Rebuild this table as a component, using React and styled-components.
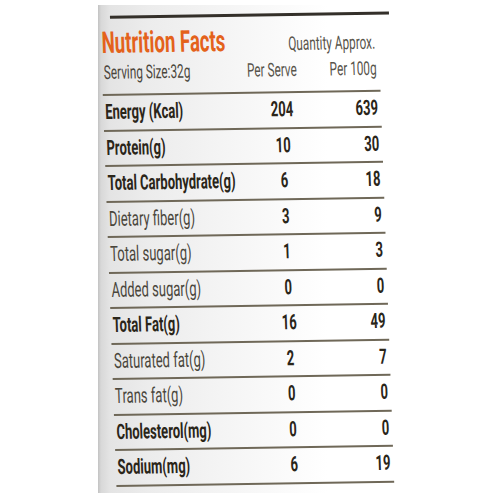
import React from "react";
import styled, { createGlobalStyle } from "styled-components";

const Global = createGlobalStyle`
  html, body { margin: 0; padding: 0; background: #fff; overflow: hidden; }
  body { font-family: Roboto, "Liberation Sans", sans-serif; }
`;

const Panel = styled.div`
  margin: 5px 0 0 98px;
  height: 488px;
  box-sizing: border-box;
  padding-top: 5px;
  background: linear-gradient(
    to right,
    #c2c2c2 0px,
    #d8d8d8 3px,
    #e4e4e4 12px,
    #ececec 50px,
    #f6f6f6 140px,
    #ffffff 230px
  );
`;

const Label = styled.div`
  width: 448px;
  margin-left: 2px;
  transform-origin: 0 0;
  transform: skew(2deg, -0.9deg) scaleX(0.62);
`;

const TopRule = styled.div`
  margin: 6px 0 0 16px;
  width: 450px;
  height: 3px;
  background: #34302a;
`;

const TitleRow = styled.div`
  display: flex;
  justify-content: space-between;
  align-items: baseline;
  margin-top: 8px;
  height: 32px;
  line-height: 32px;
  padding: 0 6px 0 1px;
`;

const Title = styled.div`
  font-size: 30px;
  font-weight: 700;
  color: #e4621b;
`;

const Qty = styled.div`
  font-size: 19px;
  color: #58544b;
`;

const Grid = styled.div`
  display: grid;
  grid-template-columns: 238px 100px 110px;
  align-items: center;
  white-space: nowrap;
`;

const SubHead = styled(Grid)`
  margin-top: 3px;
  line-height: 22px;
  padding-bottom: 10px;
  border-bottom: 2px solid #6f6858;
  font-size: 19px;
  color: #58544b;
`;

const Row = styled(Grid)`
  height: 33.5px;
  line-height: 33.5px;
  border-bottom: 2px solid #6f6858;
  font-size: 21px;
`;

const Name = styled.div`
  padding-left: 3px;
  font-weight: ${(p) => (p.$bold ? 700 : 400)};
  color: ${(p) => (p.$bold ? "#2a2519" : "#4a463c")};
`;

const Serve = styled.div`
  display: flex;
  justify-content: center;
  padding-right: ${(p) => p.$shift || 0}px;
  font-weight: ${(p) => (p.$bold ? 700 : 400)};
  color: ${(p) => (p.$bold ? "#2a2519" : "inherit")};
`;

const Hundred = styled.div`
  text-align: right;
  padding-right: 5px;
  font-weight: ${(p) => (p.$bold ? 700 : 400)};
  color: ${(p) => (p.$bold ? "#2a2519" : "inherit")};
`;

const rows = [
  ["Energy (Kcal)", "204", "639", true],
  ["Protein(g)", "10", "30", true],
  ["Total Carbohydrate(g)", "6", "18", true],
  ["Dietary fiber(g)", "3", "9", false],
  ["Total sugar(g)", "1", "3", false],
  ["Added sugar(g)", "0", "0", false],
  ["Total Fat(g)", "16", "49", true],
  ["Saturated fat(g)", "2", "7", false],
  ["Trans fat(g)", "0", "0", false],
  ["Cholesterol(mg)", "0", "0", true],
  ["Sodium(mg)", "6", "19", true],
];

export default function App() {
  return (
    <>
      <Global />
      <Panel>
        <Label>
          <TopRule />
          <TitleRow>
            <Title>Nutrition Facts</Title>
            <Qty>Quantity Approx.</Qty>
          </TitleRow>
          <SubHead>
            <Name>Serving Size:32g</Name>
            <Serve $shift={28}>
              <span>Per Serve</span>
            </Serve>
            <Hundred>Per 100g</Hundred>
          </SubHead>
          {rows.map(([name, serve, hundred, bold]) => (
            <Row key={name}>
              <Name $bold={bold}>{name}</Name>
              <Serve $bold>{serve}</Serve>
              <Hundred $bold>{hundred}</Hundred>
            </Row>
          ))}
        </Label>
      </Panel>
    </>
  );
}
